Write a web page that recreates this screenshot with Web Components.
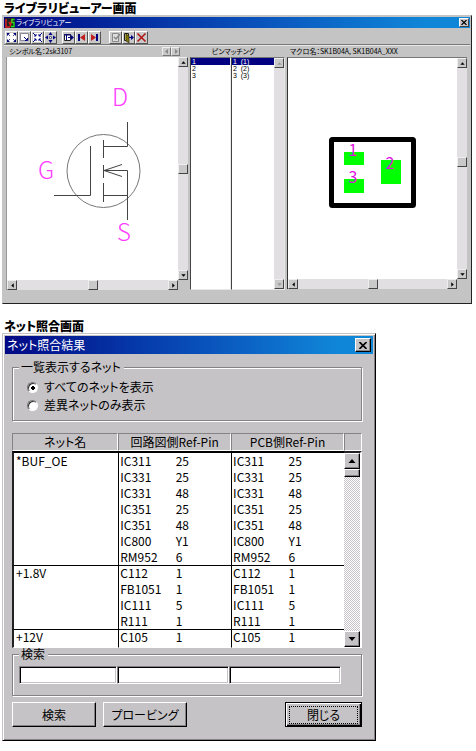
<!DOCTYPE html>
<html lang="ja">
<head>
<meta charset="utf-8">
<title>ライブラリビューアー / ネット照合</title>
<style>
  body {
    margin: 0;
    padding: 0 4px 10px 2px;
    background: #fff;
    color: #000;
    font: 12px/16px "Noto Sans CJK JP", "Liberation Sans", sans-serif;
    font-feature-settings: "palt";
  }
</style>
</head>
<body>
<demo-page></demo-page>

<script>
const define = (name, html, setup) => {
  const template = document.createElement('template');
  template.innerHTML = html;
  customElements.define(name, class extends HTMLElement {
    connectedCallback() {
      if (this.shadowRoot) return;
      const root = this.attachShadow({ mode: 'open' });
      root.append(template.content.cloneNode(true));
      if (setup) setup(this, root);
    }
  });
};

/* Window with a gradient caption; "compact" is the small-scale variant. */
define('win-frame', `
<style>
  :host { display: block; --face: #c6c3c6; background: var(--face); border: 1px solid; border-color: #c6c3c6 #000 #000 #c6c3c6; box-shadow: inset 1px 1px #fff, inset -1px -1px #848284; padding: 2px; }
  :host([compact]) { --face: #c4c4c4; padding: 1px; border-color: #c4c4c4 #222 #222 #c4c4c4; box-shadow: none; }
  header { display: flex; align-items: center; height: 18px; line-height: 16px; padding: 0 2px; background: linear-gradient(90deg, #000884, #084cb8 50%, #1086d8 90%); color: #fff; }
  span { flex: 1; white-space: nowrap; }
  button { display: grid; place-items: center; width: 16px; height: 14px; padding: 0; background: #c6c3c6; border: 1px solid; border-color: #fff #000 #000 #fff; box-shadow: inset -1px -1px #848284; }
  :host([compact]) header { height: 11px; padding: 0 1px; font-size: 7px; line-height: 11px; gap: 1px; }
  :host([compact]) button { width: 10px; height: 9px; box-shadow: none; border-color: #fff #444 #444 #fff; }
  :host([compact]) button svg { width: 6px; height: 5px; }
</style>
<header><slot name="icon"></slot><span></span>
<button aria-label="閉じる"><svg width="8" height="7" viewBox="0 0 8 7"><path d="M.5 0 7.5 7M7.5 0 .5 7" stroke="#000" stroke-width="1.6"/></svg></button></header>
<slot></slot>`, (el, root) => {
  root.querySelector('span').textContent = el.getAttribute('caption');
});

const ICONS = {
  fit: '<path d="M1 1h9v9H1z" fill="#fff"/><path d="M1 1h3L1 4zM10 1v3L7 1zM1 10V7l3 3zM10 10H7l3-3z" fill="#000080"/><path d="M2 2l2 2M9 2 7 4M2 9l2-2M9 9 7 7" stroke="#404080"/>',
  area: '<path d="M1.5 1.5h8v7h-8z" fill="#fff" stroke="#889"/><path d="M5 5l3 3M8.500 6v2.500H6" stroke="#000080" fill="none"/>',
  shrink: '<path d="M1 1h9v9H1z" fill="#fff"/><path d="M1 1l3 3M4 2v2H2M10 1 7 4M7 2v2h2M1 10l3-3M2 7h2v2M10 10 7 7M9 7H7v2" stroke="#000080" fill="none"/>',
  pan: '<path d="M5.5 0 7.500 3h-4zM5.500 11l2-3h-4zM0 5.500l3-2v4zM11 5.500l-3-2v4z" fill="#000080"/><path d="M4.500 4.500h2v2h-2z" fill="#fff" stroke="#668"/>',
  export: '<path d="M1.500 2.500h6v6h-6z" fill="#fff" stroke="#222"/><path d="M1 3h7M3.500 2v6" stroke="#000080"/><path d="M5 5h3V3l3 2.500L8 8V6H5z" fill="#000080"/>',
  prev: '<path d="M2 2h2v7H2z" fill="#000080"/><path d="M9 2v7L4 5.500z" fill="#c02020"/>',
  next: '<path d="M7 2h2v7H7z" fill="#000080"/><path d="M2 2v7l5-3.500z" fill="#c02020"/>',
  check: '<path d="M2.500 1.500h6v8h-6z" fill="#ddd" stroke="#888"/><path d="M4 5l2 2 4-5" stroke="#888" fill="none" stroke-width="1.500"/>',
  exit: '<path d="M1.500 1.500h4v7h-4z" fill="#d8d060" stroke="#222"/><path d="M3 2l3 2v7L3 9z" fill="#807800" stroke="#222" stroke-width=".6"/><path d="M6 5h2V3l3 2.500L8 8V6H6z" fill="#000080"/>',
  delete: '<path d="M1.500 1.500l8 8M9.500 1.500l-8 8" stroke="#b01010" stroke-width="1.500"/>'
};
define('tool-button', `
<style>
  :host { display: block; }
  button { display: grid; place-items: center; width: 13px; height: 13px; padding: 0; background: #c9c9c9; border: 1px solid; border-color: #fff #555 #555 #fff; }
</style>
<button><svg width="11" height="11" viewBox="0 0 11 11"></svg></button>`, (el, root) => {
  root.querySelector('svg').innerHTML = ICONS[el.getAttribute('icon')];
  root.querySelector('button').setAttribute('aria-label', el.getAttribute('label'));
});

/* Scroll bar: "before" and "after" set the share of the track on each side of the thumb. */
define('scroll-bar', `
<style>
  :host { --s: 10px; --thumb: 10px; display: flex; flex-direction: column; background: #e2dfe2; min-width: var(--s); min-height: var(--s); }
  :host([horizontal]) { flex-direction: row; }
  :host([large]) { --s: 16px; --thumb: 8px; background: repeating-conic-gradient(#c6c3c6 0 25%, #fff 0 50%) 0 0 / 2px 2px; }
  button, i { flex: none; box-sizing: border-box; display: grid; place-items: center; width: var(--s); height: var(--s); padding: 0; background: #c9c9c9; border: 1px solid; border-color: #eee #444 #444 #eee; }
  :host([large]) :is(button, i) { background: #c6c3c6; border-color: #fff #000 #000 #fff; box-shadow: inset -1px -1px #848284; }
  i { height: var(--thumb); }
  i[hidden] { display: none; }
  svg { width: 5px; height: 5px; }
  :host([large]) svg { width: 8px; height: 8px; }
  :host([disabled]) path { fill: #999; }
  :host([horizontal]) svg { transform: rotate(-90deg); }
  b { flex: 1 1 0; }
</style>
<button aria-label="戻る"><svg viewBox="0 0 8 8"><path d="M4 2 7.500 6H.5z"/></svg></button><b id="a"></b><i></i><b id="z"></b><button aria-label="進む"><svg viewBox="0 0 8 8"><path d="M4 6 7.500 2H.5z"/></svg></button>`, (el, root) => {
  root.getElementById('a').style.flexGrow = el.getAttribute('before') || 0;
  root.getElementById('z').style.flexGrow = el.getAttribute('after') || 1;
  root.querySelector('i').hidden = el.hasAttribute('disabled');
});

/* Drawing area with its two scroll bars; "before" places the vertical thumb. */
define('draw-pane', `
<style>
  :host { display: grid; grid-template-columns: 1fr 10px; background: #c4c4c4; border-left: 1px solid #999; }
  :host([framed]) { border-left-color: #333; border-top: 1px solid #777; }
  div { background: #fff; }
</style>
<div><slot></slot></div>
<span></span>
<scroll-bar horizontal before="1" after="1"></scroll-bar>`, (el, root) => {
  const bar = document.createElement('scroll-bar');
  bar.setAttribute('before', el.getAttribute('before') || 1);
  bar.setAttribute('after', 1);
  root.querySelector('span').replaceWith(bar);
});

define('pin-lists', `
<style>
  :host { display: grid; grid-template-columns: 41fr 54fr; font: 7px/7px "Liberation Sans", sans-serif; }
  ul { margin: 0; padding: 0; list-style: none; flex: 1; }
  section { display: flex; background: #fff; border: 1px solid; border-color: #777 #e8e8e8 #e8e8e8 #444; }
  li { padding-left: 1px; white-space: pre; }
  li[aria-selected] { background: #000080; color: #fff; }
</style>
<section><ul role="listbox" aria-label="シンボルのピン"><li role="option" aria-selected="true">1</li><li role="option">2</li><li role="option">3</li></ul></section>
<section><ul role="listbox" aria-label="マクロのピン"><li role="option" aria-selected="true">1  (1)</li><li role="option">2  (2)</li><li role="option">3  (3)</li></ul><scroll-bar disabled></scroll-bar></section>`);

define('library-viewer', `
<style>
  :host { display: block; }
  svg { display: block; width: 100%; height: auto; }
  win-frame > svg { width: 10px; height: 10px; }
  nav { display: flex; padding: 3px 0 0 1px; border-bottom: 1px solid #777; box-shadow: 0 1px #e8e8e8; }
  .move { margin-right: 5px; }
  .step { margin-right: 8px; }
  .main { display: grid; grid-template-columns: 182fr 95fr 180fr; column-gap: 2px; padding: 1px 3px 12px 2px; font-size: 7px; line-height: 11px; }
  .cap { display: flex; align-items: center; white-space: nowrap; padding: 0 8px 0 3px; height: 11px; }
  .cap.mid { justify-content: center; padding: 0 8px 0 0; }
  .cap span { flex: 1; }
  .cap button { display: grid; place-items: center; width: 9px; height: 9px; padding: 0; background: #c9c9c9; border: 1px solid; border-color: #eee #777 #777 #eee; }
  .cap button svg { width: 4px; height: 5px; }
  draw-pane { align-self: start; }
  text { font-family: "Noto Sans CJK JP", sans-serif; }
</style>
<win-frame compact caption="ライブラリビュアー">
  <svg slot="icon" viewBox="0 0 10 10"><path d="M0 0h10v10H0z" fill="#222"/><path d="M1 1v8h4M4 4l1.500 3L7 1" stroke="#e02020" stroke-width="1.500" fill="none"/><path d="M9.500 1.500H7v3h2v4H6" stroke="#20e020" stroke-width="1.300" fill="none"/></svg>
  <nav>
    <tool-button icon="fit" label="全体表示"></tool-button><tool-button icon="area" label="範囲表示"></tool-button><tool-button icon="shrink" label="縮小"></tool-button><tool-button class="move" icon="pan" label="移動"></tool-button>
    <tool-button icon="export" label="出力"></tool-button><tool-button icon="prev" label="前へ"></tool-button><tool-button class="step" icon="next" label="次へ"></tool-button>
    <tool-button icon="check" label="確認"></tool-button><tool-button icon="exit" label="終了"></tool-button><tool-button icon="delete" label="削除"></tool-button>
  </nav>
  <div class="main">
    <div class="cap"><span>シンボル名：2sk3107</span><button aria-label="前のシンボル"><svg viewBox="0 0 4 5"><path d="M3 0v5L0 2.500z" fill="#888"/></svg></button><button aria-label="次のシンボル"><svg viewBox="0 0 4 5"><path d="M1 0v5l3-2.500z" fill="#888"/></svg></button></div>
    <div class="cap mid">ピンマッチング</div>
    <div class="cap">マクロ名：SK1B04A, SK1B04A_XXX</div>
    <draw-pane>
      <svg viewBox="0 0 171 223" role="img" aria-label="MOSFET シンボル">
        <g fill="none" stroke="#444"><circle cx="96.500" cy="114" r="36.500" stroke="#777"/>
        <path d="M47 138.500h36.500V89M96.500 83v18M96.500 108v13M96.500 126v19M96.500 89.500h24V65M96.500 113.500h24V163M96.500 138.500h24M115 107.500l-18 6 18 6"/></g>
        <g fill="#ff40ff" font-size="24" font-weight="300"><text x="105" y="49">D</text><text x="31" y="122">G</text><text x="110" y="184">S</text></g>
      </svg>
    </draw-pane>
    <pin-lists></pin-lists>
    <draw-pane framed before=".87">
      <svg viewBox="0 0 169 221" role="img" aria-label="マクロ形状">
        <rect x="43.500" y="81.500" width="82" height="66" rx="1" fill="none" stroke="#000" stroke-width="5" stroke-linejoin="round"/>
        <path d="M56 94h20v13H56zM56 121h20v14H56zM93 102h20v24H93z" fill="#0f0"/>
        <g fill="#e010e0" font-size="16" font-weight="400" text-anchor="middle"><text x="65" y="98">1</text><text x="65" y="125">3</text><text x="102" y="111">2</text></g>
      </svg>
    </draw-pane>
  </div>
</win-frame>`);

define('group-box', `
<style>
  :host { display: block; }
  fieldset { margin: 0; min-width: 0; padding: var(--group-pad, 5px 6px); border: 1px solid #848284; box-shadow: 1px 1px #fff, inset 1px 1px #fff; }
  legend { height: 12px; line-height: 12px; padding: 0 3px 0 2px; background: #c6c3c6; }
</style>
<fieldset><legend></legend><slot></slot></fieldset>`, (el, root) => {
  root.querySelector('legend').textContent = el.getAttribute('legend');
});

define('net-filter', `
<style>
  :host { display: block; padding-left: 8px; }
  label { display: flex; align-items: center; gap: 6px; height: 18px; line-height: 18px; }
  input { appearance: none; box-sizing: border-box; width: 11px; height: 11px; margin: 0; border-radius: 50%; border: 1px solid; border-color: #777 #fff #fff #777; background: #fff; box-shadow: inset 1px 1px #333; }
  input:checked { background: radial-gradient(circle at 5px 5px, #000 2px, #fff 2px); }
</style>
<label><input type="radio" name="scope" checked>すべてのネットを表示</label>
<label><input type="radio" name="scope">差異ネットのみ表示</label>`);

const NETS = [
  ['*BUF_OE', [['IC311', '25'], ['IC331', '25'], ['IC331', '48'], ['IC351', '25'], ['IC351', '48'], ['IC800', 'Y1'], ['RM952', '6']]],
  ['+1.8V', [['C112', '1'], ['FB1051', '1'], ['IC111', '5'], ['R111', '1']]],
  ['+12V', [['C105', '1']]]
];
define('net-table', `
<style>
  :host { display: grid; grid-template-columns: 1fr 18px; }
  table { width: 100%; table-layout: fixed; border-collapse: separate; border-spacing: 0; }
  th, td { box-sizing: border-box; padding: 0; font-weight: normal; text-align: left; white-space: nowrap; vertical-align: top; line-height: 15px; }
  th[scope=col], .stub { box-sizing: border-box; height: 18px; border: 1px solid; border-color: #848284 #fff #fff #848284; background: #c6c3c6; text-align: center; line-height: 16px; }
  tbody { background: #fff; }
  tbody td, tbody th { height: 16px; padding-left: 1px; }
  tbody th { border-left: 2px solid #222; padding-left: 2px; }
  td.ref { border-left: 1px solid #000; }
  .first > * { border-top: 1px solid #000; line-height: 13px; }
  tbody:nth-of-type(1) .first > * { border-top-width: 2px; height: 18px; line-height: 15px; }
  tbody:last-child .first > * { height: 19px; border-bottom: 1px solid #fff; }
  .side { display: flex; flex-direction: column; }
  scroll-bar { flex: 1; border: solid; border-width: 2px 2px 1px 0; border-color: #222 #fff #fff; }
</style>
<table><colgroup><col style="width:32%"><col style="width:17%"><col style="width:17%"><col style="width:17%"><col style="width:17%"></colgroup>
<thead><tr><th scope="col">ネット名</th><th scope="col" colspan="2">回路図側Ref-Pin</th><th scope="col" colspan="2">PCB側Ref-Pin</th></tr></thead></table>
<div class="side"><div class="stub"></div><scroll-bar large before="0" after="1"></scroll-bar></div>`, (el, root) => {
  const table = root.querySelector('table');
  for (const [net, pins] of NETS) {
    const body = document.createElement('tbody');
    body.innerHTML = pins.map(([ref, pin], i) => {
      const pair = `<td class="ref">${ref}</td><td>${pin}</td>`;
      const head = i ? '' : `<th scope="rowgroup" rowspan="${pins.length}">${net}</th>`;
      return `<tr${i ? '' : ' class="first"'}>${head}${pair}${pair}</tr>`;
    }).join('');
    table.append(body);
  }
});

define('text-field', `
<style>
  :host { display: block; min-width: 0; }
  input { display: block; box-sizing: border-box; width: 100%; height: 18px; padding: 0 2px; font: inherit; background: #fff; border: 1px solid; border-color: #848284 #fff #fff #848284; border-radius: 0; box-shadow: inset 1px 1px #000, inset -1px -1px #c6c3c6; }
</style>
<input type="text">`, (el, root) => {
  root.querySelector('input').setAttribute('aria-label', el.getAttribute('label'));
});

define('push-button', `
<style>
  :host { display: block; }
  button { display: block; box-sizing: border-box; width: 100%; height: 25px; padding: 2px; color: #000; font: inherit; font-feature-settings: inherit; line-height: 16px; background: #c6c3c6; border: 1px solid; border-color: #fff #000 #000 #fff; box-shadow: inset -1px -1px #848284; border-radius: 0; }
  :host([default]) button { border-color: #000; box-shadow: inset 1px 1px #fff, inset -1px -1px #000, inset -2px -2px #848284; }
  span { display: block; border: 1px solid transparent; }
  :host([default]) span { border: 1px dotted #000; margin: 0 1px; }
</style>
<button><span><slot></slot></span></button>`);

define('net-dialog', `
<style>
  :host { display: block; }
  .body { padding: 7px 11px 11px 7px; }
  .scope { --group-pad: 5px 6px 6px; }
  .search { --group-pad: 6px 20px 11px 6px; }
  net-table { margin-top: 12px; }
  .fields { display: grid; grid-template-columns: 98fr 112fr 112fr; }
  .actions { display: grid; grid-template-columns: 84fr 84fr 84fr 77fr; column-gap: 7px; margin-top: 6px; }
  push-button[default] { grid-column: 4; }
</style>
<win-frame caption="ネット照合結果">
  <div class="body">
    <group-box class="scope" legend="一覧表示するネット"><net-filter></net-filter></group-box>
    <net-table></net-table>
    <group-box class="search" legend="検索"><div class="fields"><text-field label="ネット名"></text-field><text-field label="回路図側Ref-Pin"></text-field><text-field label="PCB側Ref-Pin"></text-field></div></group-box>
    <div class="actions"><push-button>検索</push-button><push-button>プロービング</push-button><push-button default>閉じる</push-button></div>
  </div>
</win-frame>`);

define('demo-page', `
<style>
  :host { display: block; }
  h2 { margin: 0; padding-left: 2px; font-size: 12px; line-height: 15px; font-weight: 900; }
  library-viewer { margin-bottom: 14px; }
  .half { display: grid; grid-template-columns: 374fr 96fr; }
</style>
<h2>ライブラリビューアー画面</h2>
<library-viewer></library-viewer>
<h2>ネット照合画面</h2>
<div class="half"><net-dialog></net-dialog></div>`);
</script>
</body>
</html>
